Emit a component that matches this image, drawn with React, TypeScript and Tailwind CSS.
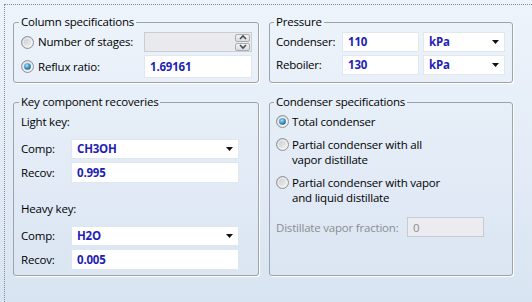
import React from "react";

function Radio({ checked }: { checked?: boolean }) {
  return (
    <svg width="13" height="13" viewBox="0 0 13 13" className="shrink-0">
      <defs>
        <linearGradient id="radioBg" x1="0" y1="0" x2="1" y2="1">
          <stop offset="0" stopColor="#c4c7ca" />
          <stop offset="1" stopColor="#f6f6f6" />
        </linearGradient>
        <radialGradient id="radioDot" cx="0.4" cy="0.35" r="0.75">
          <stop offset="0" stopColor="#a6e4fa" />
          <stop offset="0.55" stopColor="#3a93c6" />
          <stop offset="1" stopColor="#1b4e76" />
        </radialGradient>
      </defs>
      <circle cx="6.5" cy="6.5" r="6" fill="url(#radioBg)" stroke="#8f9398" />
      <circle cx="6.5" cy="6.5" r="4.3" fill="none" stroke="#ffffff" strokeOpacity="0.6" />
      {checked && <circle cx="6.5" cy="6.5" r="3.3" fill="url(#radioDot)" />}
    </svg>
  );
}

function Arrow() {
  return (
    <svg width="7" height="4" viewBox="0 0 7 4" className="shrink-0">
      <polygon points="0,0 7,0 3.5,4" fill="#111" />
    </svg>
  );
}

function Group({ title, indent, className, children }: { title: string; indent: string; className: string; children: React.ReactNode }) {
  return (
    <fieldset className={`rounded-[3px] border border-[#9ba4ad] shadow-[1px_1px_0_#ffffff] ${className}`}>
      <legend className={`${indent} px-[2px] leading-4`}>{title}</legend>
      {children}
    </fieldset>
  );
}

function TextBox({ value, className }: { value: string; className: string }) {
  return (
    <div className={`flex items-center bg-white border border-[#e1e7ee] pl-[5px] font-bold text-[#1f1fb5] ${className}`}>
      {value}
    </div>
  );
}

function Select({ value, className }: { value: string; className: string }) {
  return (
    <div className={`flex items-center justify-between bg-white border border-[#e1e7ee] pl-[5px] pr-[5px] font-bold text-[#1f1fb5] ${className}`}>
      <span>{value}</span>
      <Arrow />
    </div>
  );
}

function Spinner() {
  return (
    <div className="flex flex-col gap-[1px] mr-[1px]">
      {["M2 5 L5 2 L8 5", "M2 2 L5 5 L8 2"].map((d, i) => (
        <div key={i} className="w-[15px] h-[8px] rounded-[2px] border border-[#a9aeb4] bg-linear-to-b from-[#f4f4f4] to-[#d8dadd] flex items-center justify-center">
          <svg width="10" height="7" viewBox="0 0 10 7">
            <path d={d} fill="none" stroke="#4a4f55" strokeWidth="1.6" />
          </svg>
        </div>
      ))}
    </div>
  );
}

export default function App() {
  return (
    <div className="w-[532px] h-[302px] overflow-hidden bg-linear-to-b from-[#eef4fb] to-[#d9e4f2] pl-[4px] pt-[4px] font-['Open_Sans',sans-serif] text-[11.5px] tracking-[-0.2px] text-black whitespace-nowrap">
      <div className="h-full border-l border-t border-dotted border-[#8a8a8a] pl-[8px] pt-[9px]">
        <div className="grid grid-cols-[246px_244px] gap-x-[10px] gap-y-[11px]">
          <Group title="Column specifications" indent="ml-[5px]" className="h-[69px]">
            <div className="pl-[7px] pr-[6px] pt-[2px] flex flex-col gap-[3px]">
              <div className="flex items-center h-[20px]">
                <Radio />
                <span className="ml-[4px] flex-1">Number of stages:</span>
                <div className="w-[108px] h-full flex items-center justify-end bg-[#e9e9ee] border border-[#c9ced4]">
                  <Spinner />
                </div>
              </div>
              <div className="flex items-center h-[23px]">
                <Radio checked />
                <span className="ml-[4px] flex-1">Reflux ratio:</span>
                <TextBox value="1.69161" className="w-[108px] h-full" />
              </div>
            </div>
          </Group>

          <Group title="Pressure" indent="ml-[4px]" className="h-[69px]">
            <div className="pl-[6px] pr-[6px] pt-[2px] flex flex-col gap-[3px]">
              {[
                ["Condenser:", "110"],
                ["Reboiler:", "130"],
              ].map(([label, v]) => (
                <div key={label} className="flex items-center h-[20px]">
                  <span className="w-[66px]">{label}</span>
                  <TextBox value={v} className="w-[77px] h-full" />
                  <Select value="kPa" className="ml-[4px] w-[82px] h-full" />
                </div>
              ))}
            </div>
          </Group>

          <Group title="Key component recoveries" indent="ml-[5px]" className="h-[182px]">
            <div className="pl-[7px] pt-[4px] flex flex-col">
              <div className="leading-4">Light key:</div>
              <div className="mt-[9px] flex items-center h-[20px]">
                <span className="w-[50px]">Comp:</span>
                <Select value="CH3OH" className="w-[168px] h-full" />
              </div>
              <div className="mt-[3px] flex items-center h-[21px]">
                <span className="w-[50px]">Recov:</span>
                <TextBox value="0.995" className="w-[168px] h-full" />
              </div>
              <div className="mt-[18px] leading-4">Heavy key:</div>
              <div className="mt-[9px] flex items-center h-[20px]">
                <span className="w-[50px]">Comp:</span>
                <Select value="H2O" className="w-[168px] h-full" />
              </div>
              <div className="mt-[3px] flex items-center h-[21px]">
                <span className="w-[50px]">Recov:</span>
                <TextBox value="0.005" className="w-[168px] h-full" />
              </div>
            </div>
          </Group>

          <Group title="Condenser specifications" indent="ml-[4px]" className="h-[182px]">
            <div className="pl-[6px] pt-[4px] flex flex-col gap-[8px] leading-[15px]">
              <div className="flex items-start">
                <span className="mt-[1px]"><Radio checked /></span>
                <span className="ml-[3px]">Total condenser</span>
              </div>
              <div className="flex items-start">
                <span className="mt-[1px]"><Radio /></span>
                <span className="ml-[3px]">Partial condenser with all<br />vapor distillate</span>
              </div>
              <div className="flex items-start">
                <span className="mt-[1px]"><Radio /></span>
                <span className="ml-[3px]">Partial condenser with vapor<br />and liquid distillate</span>
              </div>
              <div className="mt-[4px] flex items-center h-[20px] text-[#8a8d91]">
                <span className="w-[131px]">Distillate vapor fraction:</span>
                <div className="w-[77px] h-full flex items-center pl-[5px] bg-[#ebebf0] border border-[#c6cbd1]">0</div>
              </div>
            </div>
          </Group>
        </div>
      </div>
    </div>
  );
}
